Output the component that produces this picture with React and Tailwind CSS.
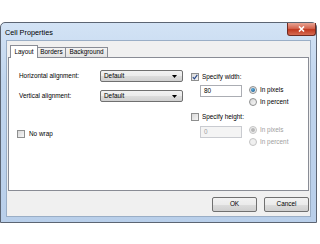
function Checkbox({ checked }) {
  return (
    <span className="flex h-[8px] w-[8px] shrink-0 items-center justify-center border border-[#8e8f8f] bg-[linear-gradient(135deg,#d8d8d8,#f6f6f6)]">
      {checked && (
        <svg width="6" height="6" viewBox="0 0 6 6">
          <path d="M0.8 3.2 L2.4 4.8 L5.3 0.8" fill="none" stroke="#2a4a8a" strokeWidth="1.2" />
        </svg>
      )}
    </span>
  );
}

function Radio({ checked, disabled }) {
  return (
    <span
      className={
        disabled
          ? "flex h-[8px] w-[8px] shrink-0 items-center justify-center rounded-full border border-[#c4c4c4] bg-[#f0f0f0]"
          : "flex h-[8px] w-[8px] shrink-0 items-center justify-center rounded-full border border-[#8e8f8f] bg-[linear-gradient(135deg,#d8d8d8,#f8f8f8)]"
      }
    >
      {checked && (
        <span
          className={
            disabled
              ? "h-[4px] w-[4px] rounded-full bg-[#b8b8b8]"
              : "h-[4px] w-[4px] rounded-full bg-[radial-gradient(circle_at_40%_35%,#5fb0e0,#0d4a80)]"
          }
        />
      )}
    </span>
  );
}

function Select() {
  return (
    <div className="flex h-[12px] items-center justify-between rounded-[2px] border border-[#707070] bg-[linear-gradient(#f2f2f2,#ebebeb_50%,#dddddd_50%,#d0d0d0)] pl-[3px] pr-[5px]">
      <span>Default</span>
      <svg width="5" height="3" viewBox="0 0 5 3">
        <path d="M0 0 H5 L2.5 3 Z" fill="#000" />
      </svg>
    </div>
  );
}

function Button({ children }) {
  return (
    <div className="flex h-[15px] w-[45px] items-center justify-center rounded-[2px] border border-[#707070] bg-[linear-gradient(#f2f2f2,#ebebeb_50%,#dddddd_50%,#cfcfcf)]">
      {children}
    </div>
  );
}

export default function App() {
  return (
    <div className="h-[244px] w-[320px] bg-white pt-[22px] font-['Liberation_Sans',Arial,sans-serif] text-[6.4px] leading-none text-black">
      {/* Window frame */}
      <div className="flex h-[201px] w-[317px] flex-col rounded-t-[5px] border border-[#5c6573] bg-[linear-gradient(#d3e3f5,#c0d5ee_30%,#b9cfea)]">
        {/* Title bar */}
        <div className="flex h-[17px] shrink-0 items-start justify-between pl-[4px]">
          <span className="mt-[6px] text-[7.3px]">Cell Properties</span>
          <div className="flex h-[13px] w-[29px] items-center justify-center rounded-b-[3px] border border-t-0 border-[#6e2b22] bg-[linear-gradient(#e8a493,#d4644f_45%,#c0381f_55%,#d66b52)]">
            <svg width="7" height="6" viewBox="0 0 7 6">
              <path d="M1 0.5 L6 5.5 M6 0.5 L1 5.5" stroke="#fff" strokeWidth="1.6" />
            </svg>
          </div>
        </div>

        {/* Client area */}
        <div className="mx-[5px] mb-[5px] flex flex-1 flex-col border border-[#9aaec6] bg-[#f0f0f0]">
          {/* Tabs */}
          <div className="ml-[3px] mt-[4px] flex h-[12px] items-end">
            <div className="relative z-10 -mb-px flex h-[13px] w-[28px] items-center justify-center border border-b-0 border-[#898c95] bg-white">
              Layout
            </div>
            <div className="flex h-[10px] w-[28px] items-center justify-center border border-b-0 border-l-0 border-[#898c95] bg-[linear-gradient(#f3f3f3,#e3e3e3)]">
              Borders
            </div>
            <div className="flex h-[10px] w-[42px] items-center justify-center border border-b-0 border-l-0 border-[#898c95] bg-[linear-gradient(#f3f3f3,#e3e3e3)]">
              Background
            </div>
          </div>

          {/* Tab panel */}
          <div className="ml-[1px] flex h-[134px] w-[301px] border border-[#898c95] bg-white pl-[10px] pt-[12px]">
            <div className="flex flex-col">
              <div className="grid grid-cols-[81px_83px] gap-y-[8px]">
                <div className="flex h-[12px] items-center">Horizontal alignment:</div>
                <Select />
                <div className="flex h-[12px] items-center">Vertical alignment:</div>
                <Select />
              </div>
              <div className="-ml-[2px] mt-[26px] flex h-[12px] items-center gap-[4px]">
                <Checkbox />
                <span>No wrap</span>
              </div>
            </div>

            <div className="ml-[8px] flex flex-col">
              <div className="mt-[1px] flex h-[12px] items-center gap-[3px]">
                <Checkbox checked />
                <span>Specify width:</span>
              </div>
              <div className="ml-[9px] mt-[1px] flex items-start">
                <div className="mt-[1px] flex h-[12px] w-[42px] items-center border border-[#abadb3] bg-white pl-[3px]">
                  80
                </div>
                <div className="ml-[7px] flex flex-col">
                  <div className="flex h-[12px] items-center gap-[3px]">
                    <Radio checked />
                    <span>In pixels</span>
                  </div>
                  <div className="flex h-[12px] items-center gap-[3px]">
                    <Radio />
                    <span>In percent</span>
                  </div>
                </div>
              </div>

              <div className="mt-[3px] flex h-[12px] items-center gap-[3px]">
                <Checkbox />
                <span>Specify height:</span>
              </div>
              <div className="ml-[9px] mt-[1px] flex items-start text-[#a0a0a0]">
                <div className="mt-[2px] flex h-[12px] w-[42px] items-center border border-[#c9cbd0] bg-[#f4f4f4] pl-[3px]">
                  0
                </div>
                <div className="ml-[7px] flex flex-col">
                  <div className="flex h-[12px] items-center gap-[3px]">
                    <Radio checked disabled />
                    <span>In pixels</span>
                  </div>
                  <div className="flex h-[12px] items-center gap-[3px]">
                    <Radio disabled />
                    <span>In percent</span>
                  </div>
                </div>
              </div>
            </div>
          </div>

          {/* Buttons */}
          <div className="mt-[6px] flex justify-end gap-[7px] pr-[1px]">
            <Button>OK</Button>
            <Button>Cancel</Button>
          </div>
        </div>
      </div>
    </div>
  );
}
